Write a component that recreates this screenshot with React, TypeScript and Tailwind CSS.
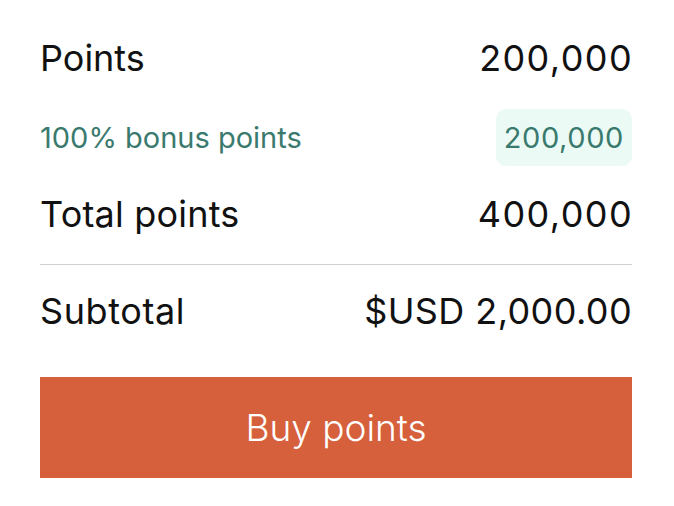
export default function App() {
  return (
    <div className="min-h-screen bg-white" style={{ fontFamily: 'Inter, "Liberation Sans", sans-serif' }}>
      <div className="w-[592px] ml-[40px] pt-[29px] flex flex-col text-[#111]">
        {/* Points */}
        <div className="h-[58px] flex items-center justify-between text-[36px]">
          <span>Points</span>
          <span className="tracking-[1.4px] -mr-[1px]">200,000</span>
        </div>

        {/* Bonus */}
        <div className="mt-[22px] h-[57px] flex items-center justify-between text-[#3a7a6e] text-[29px]">
          <span>100% bonus points</span>
          <span className="h-[57px] px-[8px] flex items-center rounded-[10px] bg-[#ebfaf5] tracking-[0.6px]">200,000</span>
        </div>

        {/* Total */}
        <div className="mt-[19px] h-[58px] flex items-center justify-between text-[36px]">
          <span className="tracking-[0.2px]">Total points</span>
          <span className="tracking-[1.4px] -mr-[1px]">400,000</span>
        </div>

        <div className="mt-[21px] h-px bg-[#cfcfd3]" />

        {/* Subtotal */}
        <div className="mt-[17px] h-[58px] flex items-center justify-between text-[36px]">
          <span className="tracking-[0.6px]">Subtotal</span>
          <span className="tracking-[0.4px]">$USD 2,000.00</span>
        </div>

        <button className="mt-[37px] h-[101px] w-full bg-[#d65f3c] text-white text-[37px] font-light">
          Buy points
        </button>
      </div>
    </div>
  );
}
